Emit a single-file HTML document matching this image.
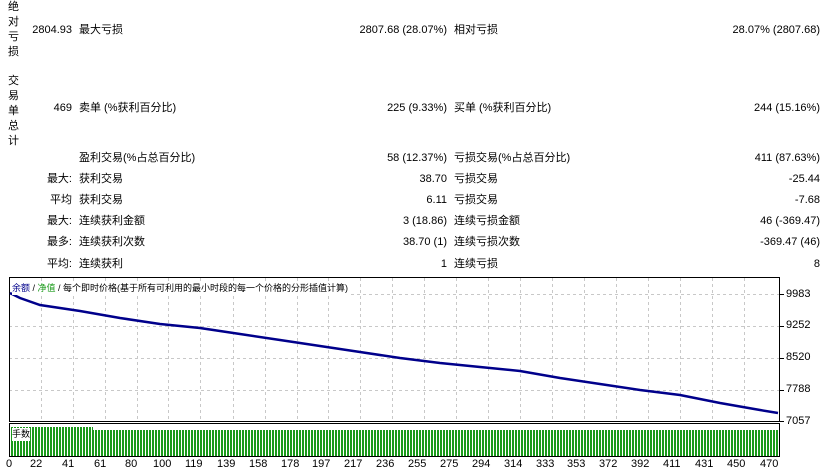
<!DOCTYPE html>
<html><head><meta charset="utf-8"><style>
body{margin:0;width:830px;height:473px;background:#fff;position:relative;overflow:hidden;font-family:"Liberation Sans","Noto Sans CJK SC",sans-serif;font-size:11px;color:#000}
.t{position:absolute;white-space:nowrap;line-height:13px}
.r{text-align:right}
.v{position:absolute;left:8px;width:12px;line-height:15px;font-size:11px}
</style></head><body>
<div class="v" style="top:0">绝<br>对<br>亏<br>损</div>
<div class="v" style="top:74px">交<br>易<br>单<br>总<br>计</div>

<div class="t r" style="top:24px;right:758px">2804.93</div>
<div class="t" style="top:24px;left:79px">最大亏损</div>
<div class="t r" style="top:24px;right:383px">2807.68 (28.07%)</div>
<div class="t" style="top:24px;left:454px">相对亏损</div>
<div class="t r" style="top:24px;right:10px">28.07% (2807.68)</div>

<div class="t r" style="top:102px;right:758px">469</div>
<div class="t" style="top:102px;left:79px">卖单 (%获利百分比)</div>
<div class="t r" style="top:102px;right:383px">225 (9.33%)</div>
<div class="t" style="top:102px;left:454px">买单 (%获利百分比)</div>
<div class="t r" style="top:102px;right:10px">244 (15.16%)</div>

<div class="t" style="top:152px;left:79px">盈利交易(%占总百分比)</div>
<div class="t r" style="top:152px;right:383px">58 (12.37%)</div>
<div class="t" style="top:152px;left:454px">亏损交易(%占总百分比)</div>
<div class="t r" style="top:152px;right:10px">411 (87.63%)</div>

<div class="t r" style="top:173px;right:758px">最大:</div>
<div class="t" style="top:173px;left:79px">获利交易</div>
<div class="t r" style="top:173px;right:383px">38.70</div>
<div class="t" style="top:173px;left:454px">亏损交易</div>
<div class="t r" style="top:173px;right:10px">-25.44</div>

<div class="t r" style="top:194px;right:758px">平均</div>
<div class="t" style="top:194px;left:79px">获利交易</div>
<div class="t r" style="top:194px;right:383px">6.11</div>
<div class="t" style="top:194px;left:454px">亏损交易</div>
<div class="t r" style="top:194px;right:10px">-7.68</div>

<div class="t r" style="top:215px;right:758px">最大:</div>
<div class="t" style="top:215px;left:79px">连续获利金额</div>
<div class="t r" style="top:215px;right:383px">3 (18.86)</div>
<div class="t" style="top:215px;left:454px">连续亏损金额</div>
<div class="t r" style="top:215px;right:10px">46 (-369.47)</div>

<div class="t r" style="top:236px;right:758px">最多:</div>
<div class="t" style="top:236px;left:79px">连续获利次数</div>
<div class="t r" style="top:236px;right:383px">38.70 (1)</div>
<div class="t" style="top:236px;left:454px">连续亏损次数</div>
<div class="t r" style="top:236px;right:10px">-369.47 (46)</div>

<div class="t r" style="top:258px;right:758px">平均:</div>
<div class="t" style="top:258px;left:79px">连续获利</div>
<div class="t r" style="top:258px;right:383px">1</div>
<div class="t" style="top:258px;left:454px">连续亏损</div>
<div class="t r" style="top:258px;right:10px">8</div>

<svg style="position:absolute;left:0;top:0" width="830" height="473">
<defs><pattern id="p" x="11" y="0" width="3" height="10" patternUnits="userSpaceOnUse"><rect width="2" height="10" fill="#1a9a1a"/></pattern></defs>
<g stroke="#c8c8c8" stroke-dasharray="3,3" stroke-width="1">
<path d="M41.5 278V421M73.5 278V421M105.5 278V421M137.5 278V421M168.5 278V421M200.5 278V421M233.5 278V421M265.5 278V421M297.5 278V421M328.5 278V421M360.5 278V421M392.5 278V421M424.5 278V421M456.5 278V421M488.5 278V421M520.5 278V421M552.5 278V421M584.5 278V421M616.5 278V421M648.5 278V421M680.5 278V421M712.5 278V421M744.5 278V421"/>
<path d="M9 294.5H779M9 326.5H779M9 358.5H779M9 390.5H779"/>
</g>
<rect x="9.5" y="277.5" width="770" height="144" fill="none" stroke="#000"/>
<rect x="9.5" y="423.5" width="770" height="33" fill="none" stroke="#000"/>
<rect x="11" y="427" width="82" height="29" fill="url(#p)"/>
<rect x="93" y="430" width="685" height="26" fill="url(#p)"/>
<polyline fill="none" stroke="#00008b" stroke-width="2.5" points="10,293 20,298 40,305 80,311 120,318 160,324 200,328 240,334 280,340 320,346 360,352 400,358 440,363 480,367 520,371 560,378 600,384 640,390 680,395 720,403 760,410 778,413"/>
<g stroke="#000"><path d="M780 294.5h4M780 326.5h4M780 358.5h4M780 390.5h4M780 421.5h4"/></g>
</svg>
<div class="t" style="top:282px;left:12px;font-size:9px;background:#fff"><span style="color:#00008b">余额</span> / <span style="color:#1a9a1a">净值</span> / 每个即时价格(基于所有可利用的最小时段的每一个价格的分形插值计算)</div>
<div class="t" style="top:428px;left:12px;font-size:9px;background:#fff">手数</div>
<div class="t" style="top:288px;left:786px">9983</div>
<div class="t" style="top:319px;left:786px">9252</div>
<div class="t" style="top:351px;left:786px">8520</div>
<div class="t" style="top:383px;left:786px">7788</div>
<div class="t" style="top:415px;left:786px">7057</div>
<div style="position:absolute;top:458px;left:0;width:830px;height:14px">
<span class="t" style="left:6px">0</span><span class="t" style="left:30px">22</span><span class="t" style="left:62px">41</span><span class="t" style="left:94px">61</span><span class="t" style="left:125px">80</span><span class="t" style="left:153px">100</span><span class="t" style="left:185px">119</span><span class="t" style="left:217px">139</span><span class="t" style="left:249px">158</span><span class="t" style="left:281px">178</span><span class="t" style="left:312px">197</span><span class="t" style="left:344px">217</span><span class="t" style="left:376px">236</span><span class="t" style="left:408px">255</span><span class="t" style="left:440px">275</span><span class="t" style="left:472px">294</span><span class="t" style="left:504px">314</span><span class="t" style="left:536px">333</span><span class="t" style="left:567px">353</span><span class="t" style="left:599px">372</span><span class="t" style="left:631px">392</span><span class="t" style="left:663px">411</span><span class="t" style="left:695px">431</span><span class="t" style="left:727px">450</span><span class="t" style="left:760px">470</span>
</div>
</body></html>
